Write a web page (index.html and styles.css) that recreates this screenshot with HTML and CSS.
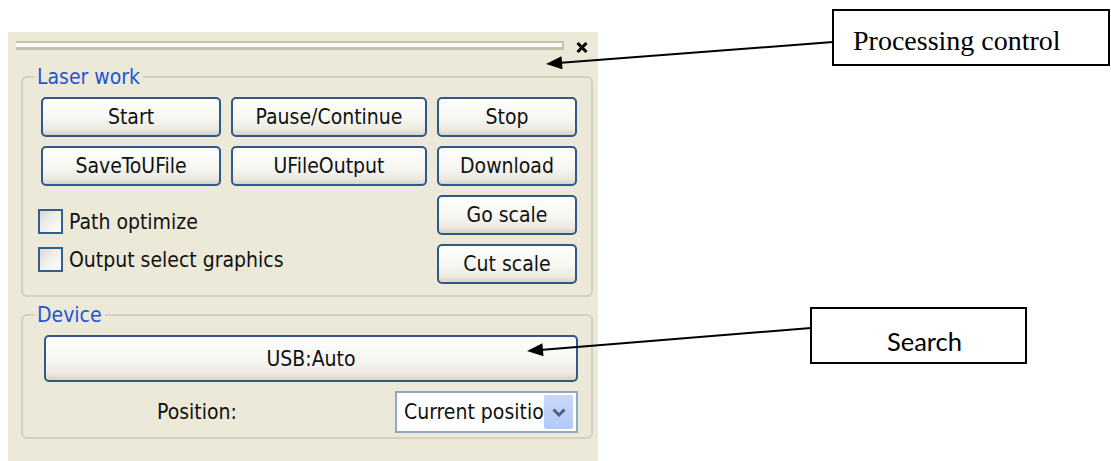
FILE: index.html
```html
<!DOCTYPE html>
<html>
<head>
<meta charset="utf-8">
<link rel="stylesheet" href="styles.css">
</head>
<body>
<div class="stage">
  <div class="panel">
    <div class="titlebar">
      <div class="grip"></div>
      <svg class="close" width="12" height="11" viewBox="0 0 12 11"><path d="M1.5 1 L10.5 10 M10.5 1 L1.5 10" stroke="#000" stroke-width="3" fill="none"/></svg>
    </div>

    <fieldset class="group group-laser">
      <legend>Laser work</legend>
      <div class="laser-grid">
        <button class="btn">Start</button>
        <button class="btn">Pause/Continue</button>
        <button class="btn">Stop</button>
        <button class="btn">SaveToUFile</button>
        <button class="btn">UFileOutput</button>
        <button class="btn">Download</button>
        <div class="checks">
          <label class="check"><span class="box"></span>Path optimize</label>
          <label class="check"><span class="box"></span>Output select graphics</label>
        </div>
        <button class="btn col3">Go scale</button>
        <button class="btn col3">Cut scale</button>
      </div>
    </fieldset>

    <fieldset class="group group-device">
      <legend>Device</legend>
      <div class="device-body">
        <button class="btn btn-wide">USB:Auto</button>
        <div class="pos-row">
          <span class="pos-label">Position:</span>
          <div class="combo">
            <span class="combo-text">Current position</span>
            <span class="combo-btn">
              <svg width="14" height="9" viewBox="0 0 14 9"><path d="M1.5 1.5 L7 7 L12.5 1.5" stroke="#4d6185" stroke-width="3" fill="none"/></svg>
            </span>
          </div>
        </div>
      </div>
    </fieldset>
  </div>

  <svg class="arrows" width="1111" height="461" viewBox="0 0 1111 461">
    <line x1="833" y1="42" x2="558" y2="63" stroke="#000" stroke-width="2"/>
    <polygon points="546,64 562.5,69.3 561.5,56.3" fill="#000"/>
    <line x1="811" y1="328" x2="540" y2="350" stroke="#000" stroke-width="2"/>
    <polygon points="527,351 543.5,356.2 542.4,343.2" fill="#000"/>
  </svg>

  <div class="note note-processing"><div class="note-text">Processing control</div></div>
  <div class="note note-search">Search</div>
</div>
</body>
</html>
```

FILE: styles.css
```css
html, body {
  margin: 0;
  padding: 0;
  background: #ffffff;
}

.stage {
  position: relative;
  width: 1111px;
  height: 461px;
  overflow: hidden;
  padding-top: 32px;
  box-sizing: border-box;
}

.panel {
  margin-left: 8px;
  width: 590px;
  height: 429px;
  background: #ece9d8;
  padding: 0 5px 0 13px;
  box-sizing: border-box;
  font-family: "DejaVu Sans Condensed", "DejaVu Sans", sans-serif;
  font-stretch: condensed;
  font-size: 21px;
  color: #111;
}

.titlebar {
  display: flex;
  align-items: flex-start;
  margin-left: -5px;
  padding-top: 9px;
  height: 36px;
  box-sizing: border-box;
}

.grip {
  width: 548px;
  height: 9px;
  box-sizing: border-box;
  border-top: 2px solid #c4c0ad;
  border-bottom: 3px solid #c4c0ad;
  border-right: 2px solid #c4c0ad;
  background: #fbfbf8;
}

.close {
  margin-left: 12px;
  margin-top: 1px;
}

.group {
  margin: 0;
  padding: 0;
  border: 2px solid #d3d0bf;
  border-radius: 6px;
  min-width: 0;
}

.group legend {
  margin-left: 11px;
  padding: 0 3px;
  color: #2056d6;
  line-height: 18px;
  font-size: 21px;
}

.group-device {
  margin-top: 9px;
}

.laser-grid {
  display: grid;
  grid-template-columns: 180px 196px 140px;
  grid-template-rows: 40px 40px 40px 40px;
  column-gap: 10px;
  row-gap: 9px;
  padding: 11px 0 11px 18px;
}

.btn {
  font-family: "DejaVu Sans Condensed", "DejaVu Sans", sans-serif;
  font-stretch: condensed;
  font-size: 21px;
  color: #111;
  border: 2px solid #30598a;
  border-radius: 5px;
  background: linear-gradient(#fefefd 0%, #f6f6f2 55%, #ebe9e0 85%, #d8d3c3 100%);
  padding: 0;
  margin: 0;
  height: 100%;
}

.col3 {
  grid-column: 3;
}

.checks {
  grid-column: 1 / span 2;
  grid-row: 3 / span 2;
  display: flex;
  flex-direction: column;
  gap: 13px;
  padding-top: 14px;
  margin-left: -3px;
}

.check {
  display: flex;
  align-items: center;
  gap: 6px;
  height: 25px;
}

.box {
  width: 25px;
  height: 25px;
  box-sizing: border-box;
  border: 2px solid #30608f;
  background: linear-gradient(135deg, #d9d9d2 0%, #eeeeea 45%, #fdfdfc 100%);
}

.device-body {
  padding: 11px 13px 4px 21px;
  display: flex;
  flex-direction: column;
  gap: 9px;
}

.btn-wide {
  width: 534px;
  height: 47px;
}

.pos-row {
  display: flex;
  align-items: center;
  height: 42px;
}

.pos-label {
  margin-left: 113px;
  width: 240px;
}

.combo {
  width: 183px;
  height: 42px;
  box-sizing: border-box;
  border: 2px solid #8fa9c6;
  background: #fff;
  display: flex;
  align-items: center;
  padding: 2px 3px 2px 7px;
}

.combo-text {
  flex: 1;
  overflow: hidden;
  white-space: nowrap;
}

.combo-btn {
  width: 29px;
  height: 34px;
  background: linear-gradient(#c9d8fc, #b3c8f7);
  border-radius: 2px;
  display: flex;
  align-items: center;
  justify-content: center;
}

.arrows {
  position: absolute;
  top: 0;
  left: 0;
  pointer-events: none;
}

.note {
  position: absolute;
  box-sizing: border-box;
  border: 2px solid #000;
  background: #fff;
  color: #000;
}

.note-processing {
  left: 832px;
  top: 9px;
  width: 278px;
  height: 57px;
  font-family: "Liberation Serif", serif;
  font-size: 28px;
  padding-left: 19px;
}

.note-text {
  margin-top: 16px;
  line-height: 28px;
  white-space: nowrap;
}

.note-search {
  left: 810px;
  top: 307px;
  width: 217px;
  height: 57px;
  font-family: Lato, sans-serif;
  font-size: 25.5px;
  display: flex;
  align-items: center;
  justify-content: center;
  padding: 10px 0 0 12px;
}
```
